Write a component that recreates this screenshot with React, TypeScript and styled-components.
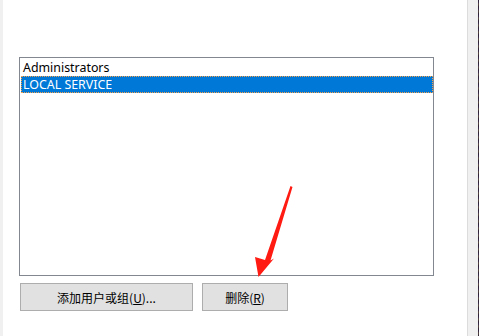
import React from "react";
import styled, { createGlobalStyle } from "styled-components";

const Global = createGlobalStyle`
  html, body { margin: 0; padding: 0; background: #ffffff; }
  body { width: 479px; height: 336px; overflow: hidden; }
  #root { width: 479px; height: 336px; }
`;

const Page = styled.div`
  position: relative;
  display: flex;
  width: 479px;
  height: 336px;
  font-family: "Noto Sans", "Noto Sans CJK SC", sans-serif;
  font-size: 12px;
  color: #000;
`;

const LeftEdge = styled.div`
  width: 3px;
  background: #f0f0f0;
  flex: none;
`;

const Content = styled.div`
  flex: 1;
  background: #ffffff;
  display: flex;
  flex-direction: column;
  padding: 57px 0 0 16px;
`;

const RightEdge = styled.div`
  width: 11px;
  flex: none;
  display: flex;
  background: #f0f0f0;
  border-left: 1px solid #dcdcdc;
`;

const EdgeGap = styled.div`
  flex: 1;
`;

const DarkLine = styled.div`
  width: 1px;
  background: repeating-linear-gradient(
    to bottom,
    #2b2035 0px,
    #3a2c4a 3px,
    #5a4a3a 4px,
    #2b2035 7px
  );
`;

const ListBox = styled.div`
  width: 415px;
  height: 219px;
  box-sizing: border-box;
  border: 1px solid #828790;
  background: #fff;
  padding: 1px 0 0 1px;
  display: flex;
  flex-direction: column;
`;

const Row = styled.div<{ $selected?: boolean }>`
  height: 17px;
  box-sizing: border-box;
  padding-left: 1px;
  font-size: 12.4px;
  line-height: 15px;
  white-space: nowrap;
  background: ${(p) => (p.$selected ? "#0078d7" : "transparent")};
  color: ${(p) => (p.$selected ? "#ffffff" : "#000000")};
  border: 1px ${(p) => (p.$selected ? "dotted #f5a04a" : "solid transparent")};
`;

const ButtonRow = styled.div`
  display: flex;
  gap: 9px;
  margin-top: 7px;
  margin-left: 1px;
`;

const Button = styled.div<{ $w: number }>`
  width: ${(p) => p.$w}px;
  height: 28px;
  box-sizing: border-box;
  background: #e1e1e1;
  border: 1px solid #adadad;
  display: flex;
  align-items: center;
  justify-content: center;
  font-family: "Noto Sans CJK SC", sans-serif;
  font-size: 12px;
  color: #000;
`;

const U = styled.span`
  text-decoration: underline;
`;

const Arrow = styled.svg`
  position: absolute;
  left: 0;
  top: 0;
  pointer-events: none;
`;

export default function App() {
  return (
    <>
      <Global />
      <Page>
        <LeftEdge />
        <Content>
          <ListBox>
            <Row>Administrators</Row>
            <Row $selected>LOCAL SERVICE</Row>
          </ListBox>
          <ButtonRow>
            <Button $w={173}>
              添加用户或组(<U>U</U>)...
            </Button>
            <Button $w={86}>
              删除(<U>R</U>)
            </Button>
          </ButtonRow>
        </Content>
        <RightEdge>
          <EdgeGap />
          <DarkLine />
        </RightEdge>
        <Arrow width="479" height="336" viewBox="0 0 479 336">
          <polygon
            points="290.5,186 292.5,187 270.5,260.5 274,258.5 258.5,277 255,257 265,260 "
            fill="#ff1a12"
          />
        </Arrow>
      </Page>
    </>
  );
}
